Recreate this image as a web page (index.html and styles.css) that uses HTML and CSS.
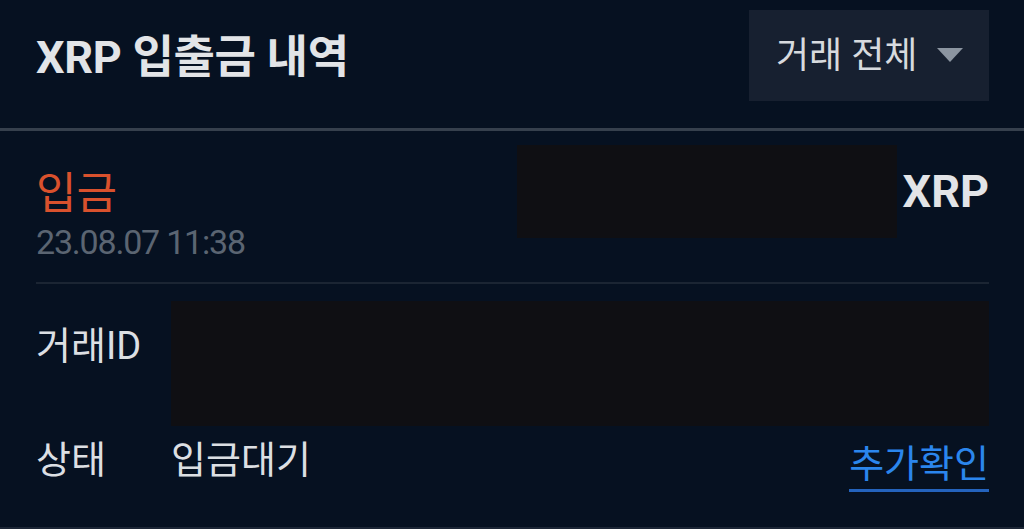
FILE: index.html
```html
<!DOCTYPE html>
<html lang="ko">
<head>
<meta charset="utf-8">
<title>XRP 입출금 내역</title>
<link rel="stylesheet" href="styles.css">
</head>
<body>
<div class="page">
  <header class="header">
    <h1 class="title">XRP 입출금 내역</h1>
    <button class="filter" type="button">
      <span class="filter-label">거래 전체</span>
      <svg class="caret" width="26" height="14" viewBox="0 0 26 14" aria-hidden="true"><path d="M0 0H26L13 14Z" fill="#8c95a1"/></svg>
    </button>
  </header>
  <main class="content">
    <section class="summary">
      <div class="summary-left">
        <div class="type">입금</div>
        <div class="date">23.08.07 11:38</div>
      </div>
      <div class="redact redact-amount"></div>
      <div class="coin">XRP</div>
    </section>
    <section class="details">
      <div class="detail-row">
        <div class="label">거래ID</div>
        <div class="redact redact-id"></div>
      </div>
      <div class="detail-row status-row">
        <div class="label">상태</div>
        <div class="value">입금대기</div>
        <a class="more" href="#">추가확인</a>
      </div>
    </section>
  </main>
</div>
</body>
</html>
```

FILE: styles.css
```css
html, body {
  margin: 0;
  padding: 0;
  background: #061121;
}
body {
  font-family: Roboto, "Noto Sans CJK KR", sans-serif;
  color: #dcdfe3;
  height: 529px;
  overflow: hidden;
}
.page {
  display: flex;
  flex-direction: column;
  height: 529px;
  border-bottom: 2px solid #1c2636;
  box-sizing: border-box;
}
.header {
  display: flex;
  justify-content: space-between;
  align-items: center;
  padding: 10px 35px 27px 36px;
  border-bottom: 3px solid #36404d;
}
.title {
  margin: 0;
  font-size: 45px;
  font-weight: 700;
  color: #e2e4e7;
  letter-spacing: -0.3px;
  line-height: 1;
  padding-top: 4px;
}
.filter {
  display: flex;
  align-items: center;
  gap: 20px;
  height: 91px;
  width: 240px;
  padding: 0 0 0 27px;
  box-sizing: border-box;
  background: #172030;
  border: none;
  font-family: inherit;
  cursor: pointer;
}
.filter-label {
  font-size: 36px;
  color: #d7dade;
  line-height: 1;
}
.caret {
  display: block;
  margin-top: -2px;
}
.content {
  padding: 0 35px 0 36px;
  display: flex;
  flex-direction: column;
}
.summary {
  display: flex;
  align-items: flex-start;
  padding-top: 14px;
  padding-bottom: 20px;
  border-bottom: 2px solid #1b2533;
}
.summary-left {
  flex: 1;
  display: flex;
  flex-direction: column;
  padding-top: 24px;
}
.type {
  font-size: 44px;
  line-height: 50px;
  color: #d9512d;
}
.date {
  font-size: 34px;
  line-height: 40px;
  letter-spacing: -1.2px;
  color: #5b6572;
  margin-top: 3px;
}
.redact {
  background: #0f0f13;
}
.redact-amount {
  width: 380px;
  height: 93px;
  flex: none;
}
.coin {
  margin-left: 6px;
  padding-top: 22px;
  font-size: 45px;
  font-weight: 700;
  line-height: 50px;
  color: #e2e4e7;
}
.details {
  display: flex;
  flex-direction: column;
  padding-top: 17px;
}
.detail-row {
  display: grid;
  grid-template-columns: 135px 1fr auto;
  align-items: start;
}
.label, .value {
  font-size: 38px;
  line-height: 44px;
  color: #dcdfe3;
}
.detail-row .label {
  padding-top: 23px;
}
.redact-id {
  grid-column: 2 / 4;
  height: 125px;
}
.status-row {
  margin-top: 12px;
}
.status-row .label, .status-row .value {
  padding-top: 0;
}
.more {
  font-size: 38px;
  line-height: 44px;
  color: #2b86ed;
  text-decoration: none;
  border-bottom: 3px solid #2463bd;
  padding-bottom: 3px;
  margin-top: 4px;
}
```
